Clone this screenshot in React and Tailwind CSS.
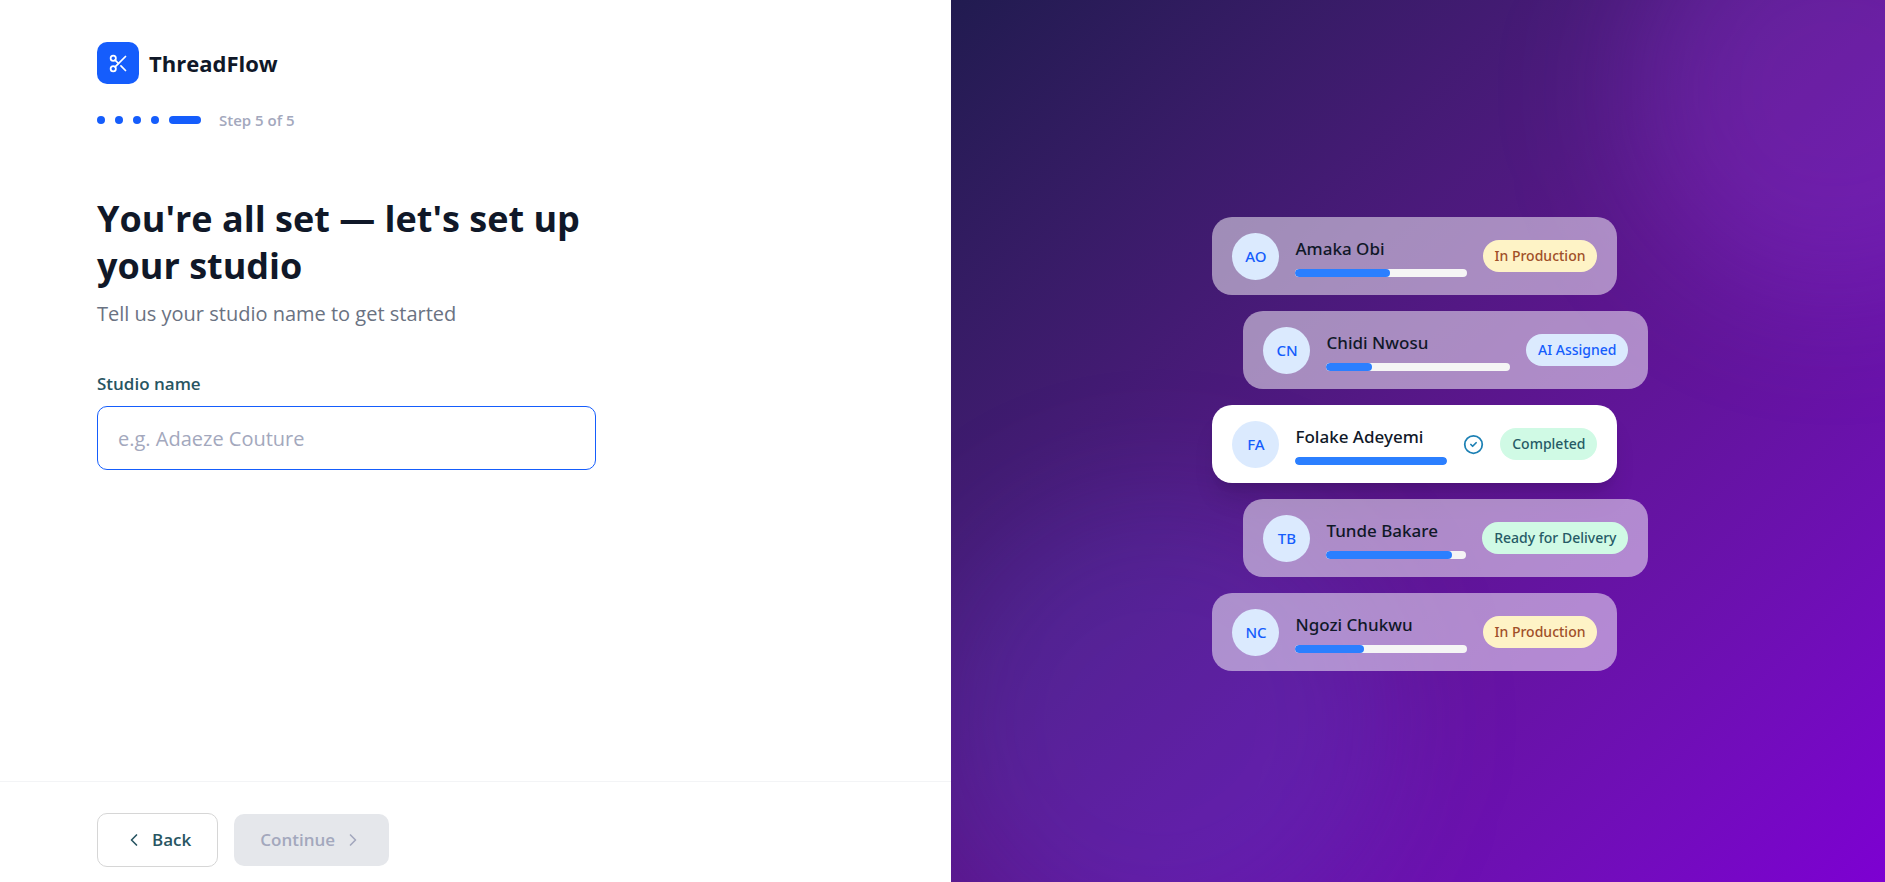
import { useState } from "react";
import { ChevronLeft, ChevronRight, CircleCheck, Scissors } from "lucide-react";
import clsx from "clsx";

const TOTAL_STEPS = 5;
const CURRENT_STEP = 5;

const orders = [
    { initials: "AO", name: "Amaka Obi", progress: 55, status: "In Production" },
    { initials: "CN", name: "Chidi Nwosu", progress: 25, status: "AI Assigned" },
    { initials: "FA", name: "Folake Adeyemi", progress: 100, status: "Completed" },
    { initials: "TB", name: "Tunde Bakare", progress: 90, status: "Ready for Delivery" },
    { initials: "NC", name: "Ngozi Chukwu", progress: 40, status: "In Production" },
];

const statusStyles = {
    "In Production": "bg-amber-100 text-[#a04f28]",
    "AI Assigned": "bg-blue-100 text-blue-600",
    "Completed": "bg-emerald-100 text-[#265a66]",
    "Ready for Delivery": "bg-emerald-100 text-[#265a66]",
};

function StepIndicator() {
    return (
        <div className="mt-6 flex items-center gap-[10px]">
            {Array.from({ length: TOTAL_STEPS }, (_, i) => (
                <span
                    key={i}
                    className={clsx(
                        "h-2 rounded-full bg-blue-600",
                        i + 1 === CURRENT_STEP ? "w-8" : "w-2"
                    )}
                />
            ))}
            <span className="ml-2 text-[15px] leading-6 font-semibold text-[#a3a8bd]">
                Step {CURRENT_STEP} of {TOTAL_STEPS}
            </span>
        </div>
    );
}

function OrderCard({ order, shifted }) {
    const done = order.progress === 100;

    return (
        <li
            className={clsx(
                "flex h-[78px] items-center gap-4 rounded-[20px] px-5 font-['Noto_Sans',sans-serif] font-medium",
                shifted && "translate-x-[31px]",
                done ? "bg-white shadow-xl" : "bg-white/50"
            )}
        >
            <div className="flex size-[47px] shrink-0 items-center justify-center rounded-full bg-blue-100 text-[15px] text-blue-600">
                {order.initials}
            </div>
            <div className="min-w-0 flex-1 pt-[2px]">
                <p className="truncate text-[17px] leading-6 text-gray-900">{order.name}</p>
                <div className="mt-2 h-2 overflow-hidden rounded-full bg-neutral-100">
                    <div
                        className="h-full rounded-full bg-[#2b7fff]"
                        style={{ width: `${order.progress}%` }}
                    />
                </div>
            </div>
            {done && <CircleCheck className="size-[21px] shrink-0 text-[#1c80b4]" />}
            <span
                className={clsx(
                    "shrink-0 rounded-full px-3 py-[6px] text-sm leading-5",
                    statusStyles[order.status]
                )}
            >
                {order.status}
            </span>
        </li>
    );
}

export default function App() {
    const [studioName, setStudioName] = useState("");

    return (
        <div className="flex min-h-screen bg-white font-['Open_Sans','Noto_Sans',sans-serif]">
            <main className="flex w-[50.45%] flex-col">
                <div className="flex-1 px-[97px] pt-[42px]">
                    {/* Brand */}
                    <div className="flex items-center gap-[10px]">
                        <div className="flex size-[42px] items-center justify-center rounded-[10px] bg-blue-600">
                            <Scissors className="size-[21px] text-white" />
                        </div>
                        <span className="text-[22px] leading-8 font-bold text-gray-900">ThreadFlow</span>
                    </div>

                    <StepIndicator />

                    {/* Studio form */}
                    <form id="studio-form" className="mt-[63px] max-w-[499px]" onSubmit={(e) => e.preventDefault()}>
                        <h1 className="text-[36px] leading-[47px] font-bold text-gray-900">
                            You're all set — let's set up your studio
                        </h1>
                        <p className="mt-[9px] text-[20px] leading-8 text-gray-500">
                            Tell us your studio name to get started
                        </p>
                        <label
                            htmlFor="studio-name"
                            className="mt-[42px] block text-[17px] leading-6 font-semibold text-[#285562]"
                        >
                            Studio name
                        </label>
                        <input
                            id="studio-name"
                            type="text"
                            value={studioName}
                            onChange={(e) => setStudioName(e.target.value)}
                            placeholder="e.g. Adaeze Couture"
                            className="mt-[10px] h-16 w-full rounded-[10px] border border-blue-600 px-5 text-[20px] text-gray-900 outline-none placeholder:text-[#a3a8bd]"
                        />
                    </form>
                </div>

                <footer className="flex items-center gap-4 border-t border-gray-100 px-[97px] pt-[31px] pb-[15px]">
                    <button
                        type="button"
                        className="flex h-[54px] items-center gap-2 rounded-[10px] border border-[#d6d6d6] px-[26px] text-[17px] font-semibold text-[#285562]"
                    >
                        <ChevronLeft className="size-5" />
                        Back
                    </button>
                    <button
                        type="submit"
                        form="studio-form"
                        disabled={!studioName}
                        className="flex h-[52px] items-center gap-2 rounded-[10px] bg-blue-600 px-[26px] text-[17px] font-semibold text-white disabled:bg-gray-200 disabled:text-[#a3a8bd]"
                    >
                        Continue
                        <ChevronRight className="size-5" />
                    </button>
                </footer>
            </main>

            <aside className="relative flex flex-1 items-center justify-center overflow-hidden bg-linear-to-br from-[#211b50] via-purple-900 to-[#7d00d2] pt-[6px] pr-[6px]">
                {/* Soft glows behind the cards */}
                <div className="absolute -top-[118px] -right-[158px] size-[416px] rounded-full bg-purple-500/20 blur-3xl" />
                <div className="absolute -bottom-[70px] -left-[20px] size-[460px] rounded-full bg-indigo-500/15 blur-3xl" />

                <ul className="relative flex w-[405px] flex-col gap-4">
                    {orders.map((order, i) => (
                        <OrderCard key={order.initials} order={order} shifted={i % 2 === 1} />
                    ))}
                </ul>
            </aside>
        </div>
    );
}
